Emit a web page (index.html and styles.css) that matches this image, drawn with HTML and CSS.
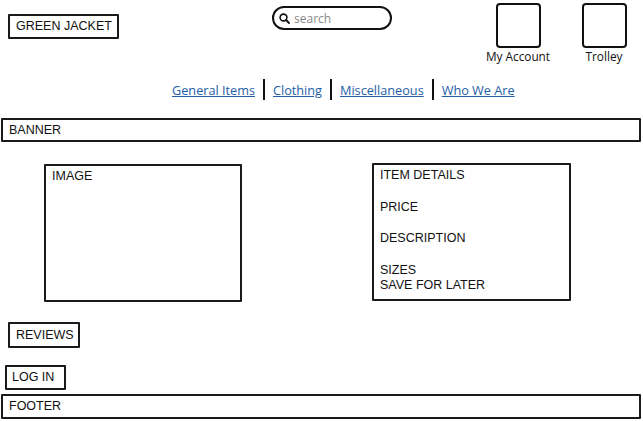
FILE: index.html
```html
<!DOCTYPE html>
<html>
<head>
<meta charset="utf-8">
<link rel="stylesheet" href="styles.css">
</head>
<body>
<header class="header">
  <div class="logo box">GREEN JACKET</div>
  <div class="search">
    <svg class="search-icon" width="11" height="11" viewBox="0 0 11 11"><circle cx="4.5" cy="4.5" r="3.4" fill="none" stroke="#111" stroke-width="1.6"/><line x1="7" y1="7" x2="10" y2="10" stroke="#111" stroke-width="1.8" stroke-linecap="round"/></svg>
    <span class="search-text">search</span>
  </div>
  <div class="icons">
    <div class="icon-item"><div class="icon-box"></div><span class="icon-label">My Account</span></div>
    <div class="icon-item"><div class="icon-box"></div><span class="icon-label">Trolley</span></div>
  </div>
</header>
<nav class="nav">
  <a href="#">General Items</a><span class="sep"></span>
  <a href="#">Clothing</a><span class="sep"></span>
  <a href="#">Miscellaneous</a><span class="sep"></span>
  <a href="#">Who We Are</a>
</nav>
<div class="banner box">BANNER</div>
<main class="product">
  <div class="image box">IMAGE</div>
  <div class="details box">ITEM DETAILS<br><br>PRICE<br><br>DESCRIPTION<br><br>SIZES<br>SAVE FOR LATER</div>
</main>
<div class="reviews box">REVIEWS</div>
<div class="login box">LOG IN</div>
<footer class="footer box">FOOTER</footer>
</body>
</html>
```
FILE: styles.css
```css
* { box-sizing: border-box; }
body {
  margin: 0;
  font-family: "Liberation Sans", Arial, sans-serif;
  font-size: 12.5px;
  color: #111;
  background: #fff;
  width: 643px;
  height: 421px;
  overflow: hidden;
}
.box {
  border: 2px solid #1a1a1a;
  border-radius: 1px;
}
.header {
  display: flex;
  align-items: flex-start;
  height: 79px;
}
.logo {
  margin: 14px 0 0 8px;
  width: 111px;
  height: 25px;
  padding-left: 6px;
  line-height: 21px;
}
.search {
  margin: 6px 0 0 153px;
  width: 120px;
  height: 24px;
  border: 2px solid #111;
  border-radius: 12px;
  display: flex;
  align-items: center;
  padding-left: 5px;
  gap: 4px;
}
.search-text {
  color: #888;
  font-family: "Open Sans", sans-serif;
  font-size: 12px;
}
.icons {
  display: flex;
  gap: 16px;
  margin: 2px 0 0 91px;
}
.icon-item {
  width: 70px;
  display: flex;
  flex-direction: column;
  align-items: center;
}
.icon-box {
  width: 45px;
  height: 45px;
  border: 2px solid #111;
  border-radius: 4px;
  margin-top: 1px;
}
.icon-label {
  margin-top: 0;
  font-family: "Open Sans", sans-serif;
  font-size: 11.8px;
  line-height: 16px;
  color: #111;
}
.nav {
  display: flex;
  align-items: center;
  height: 21px;
  padding-left: 172px;
  font-family: "Open Sans", sans-serif;
  font-size: 12.7px;
}
.nav a {
  color: #2460a7;
  text-decoration: underline;
}
.sep {
  width: 2px;
  height: 21px;
  background: #111;
  margin: 0 8px 0 8px;
}
.banner {
  margin: 18px 0 0 1px;
  width: 640px;
  height: 24px;
  padding-left: 6px;
  line-height: 20px;
}
.product {
  display: flex;
  align-items: flex-start;
  margin-top: 21px;
  height: 159px;
}
.image {
  margin: 1px 0 0 44px;
  width: 198px;
  height: 138px;
  padding: 2px 0 0 6px;
  line-height: 16px;
}
.details {
  margin-left: 130px;
  width: 199px;
  height: 138px;
  padding: 3px 0 0 6px;
  line-height: 15.75px;
}
.reviews {
  margin-left: 8px;
  width: 72px;
  height: 26px;
  padding-left: 6px;
  line-height: 22px;
}
.login {
  margin: 17px 0 0 5px;
  width: 61px;
  height: 25px;
  padding-left: 5px;
  line-height: 21px;
}
.footer {
  margin: 4px 0 0 1px;
  width: 640px;
  height: 25px;
  padding-left: 6px;
  line-height: 21px;
}
```
